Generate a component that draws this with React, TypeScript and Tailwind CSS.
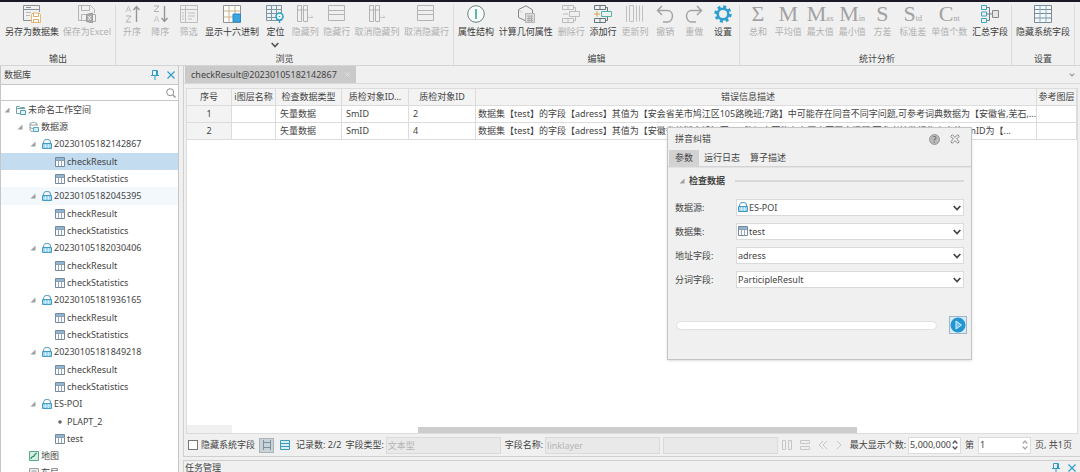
import type { ReactNode } from "react";
import { clsx } from "clsx";

// --------------------------------------------------------
// Icons
// --------------------------------------------------------

interface SvgProps {
    children: ReactNode;
    className?: string;
    box?: string;
}

const Svg = ({ children, className = "w-[18px] h-[18px]", box = "0 0 18 18" }: SvgProps) => (
    <svg viewBox={box} className={clsx("shrink-0", className)} fill="none" stroke="currentColor" strokeWidth="1" aria-hidden="true">
        {children}
    </svg>
);

const SaveDatasetIcon = () => (
    <Svg>
        <path d="M9 15.500H.5V.5h16V7M.5 4.500h16M3 2.500h5" stroke="#8a9096" />
        <path d="M3 7.500h5M3 10.500h4" stroke="#b5babf" />
        <path d="M8.500 17.500v-8l1.500-1.500h6l1.500 1.500v8z" fill="#fff" stroke="#e8b877" />
        <path d="M10.500 8v3.500h5V8M10.500 17.500v-3h5v3" stroke="#e0a860" />
    </Svg>
);

const SaveExcelIcon = () => (
    <Svg>
        <path d="M8 15.500H.5V.5h12l4 4V8M3.500.5v5h8v-5M3.500 15.500v-6H8" stroke="#b4b4b4" />
        <path d="M8.500 9.500l6-1.500v10l-6-1.500z" fill="#aaa" stroke="#999" />
        <path d="M10 11l3 4M13 11l-3 4" stroke="#eee" />
        <path d="M14.500 9.500h3v7h-3" stroke="#aaa" />
    </Svg>
);

const SortIcon = ({ down = false }: { down?: boolean }) => (
    <Svg>
        <path d={down ? "M3 1h5L3 6.500h5" : "M3 11h5l-5 6h5"} stroke="#b0b0b0" />
        <path d={down ? "M3 17l2.500-6 2.500 6M4 15h3" : "M3 7l2.500-6L8 7M4 5h3"} stroke={down ? "#ccc" : "#c4c4c4"} />
        {down ? <path d="M13.500 1v15M10.500 13l3 3.500 3-3.500" stroke="#969696" strokeWidth="1.4" /> : <path d="M13.500 17V2M10.500 5l3-3.500 3 3.500" stroke="#969696" strokeWidth="1.4" />}
    </Svg>
);

const FilterIcon = () => (
    <Svg>
        <path d="M.5.5h17v17H.5zM.5 4.500h17M5.500.5v17M8 8h7M8 11h7M8 14h4M2 8h2M2 11h2M2 14h2" stroke="#bdbdbd" />
    </Svg>
);

const HexIcon = () => (
    <Svg>
        <path d="M.5.5h17v17H.5z" fill="#fdfdfb" stroke="#8b9298" />
        <path d="M.5 6h17M.5 12h17M6 .5v17M12 .5v17" stroke="#c9b48c" />
        <path d="M10 9h7.500v8H10z" fill="#3aa5e0" stroke="#2b87c4" />
    </Svg>
);

const LocateIcon = () => (
    <Svg>
        <path d="M.5.5h15v15H.5zM.5 4.500h15M.5 8.500h15M.5 12.500h15M5.500.5v15M10.500.5v15" stroke="#7d97a3" />
        <circle cx="13.500" cy="11.500" r="3.500" fill="#eefaff" stroke="#27a3c9" strokeWidth="1.600" />
        <path d="M13.500 15v3M13.500 11v1" stroke="#27a3c9" strokeWidth="1.400" />
    </Svg>
);

const HideColIcon = () => (
    <Svg>
        <path d="M1.500.5h4v16h-4zM7.500.5h4v16h-4zM1.500 5h10" stroke="#b3b3b3" />
        <path d="M12 12.500h5M15 10.500l2 2" stroke="#c8c8c8" />
    </Svg>
);

const HideRowIcon = () => (
    <Svg>
        <path d="M.5.5h16v5H.5zM.5 9.500h16v6H.5zM.5 5.500v4M16.500 5.500v4" stroke="#b3b3b3" />
    </Svg>
);

const AttrIcon = () => (
    <Svg>
        <circle cx="9" cy="9" r="8.300" fill="#f7fbfa" stroke="#6f8180" />
        <path d="M9 4v10" stroke="#35ab93" strokeWidth="1.600" />
    </Svg>
);

const GeometryIcon = () => (
    <Svg>
        <path d="M8 15.500l-6.500-3v-8L9 .8l6.500 4V8" stroke="#858585" />
        <path d="M1.500 5l4 2.500" stroke="#ccc" />
        <path d="M8.500 8.500h9v9h-9z" fill="#dcdcdc" stroke="#b4b4b4" />
        <path d="M10 11h6M10 13.500h6M10 15.500h6M12 11v6M14.500 11v6" stroke="#adadad" />
    </Svg>
);

const RowsIcon = ({ add = false }: { add?: boolean }) => (
    <Svg className={add ? "w-[20px] h-[18px] text-[#65767c]" : "w-[20px] h-[18px] text-[#bcbcbc]"} box="0 0 20 18">
        <path d="M1.500.5h11v4h-11zM7 .5v4M1.500 13.500h11v4h-11zM7 13.500v4M12.500 2.500h2v4M12.500 15.500h2v-4" />
        <path d="M8.500 6.500h10v5h-10z" stroke={add ? "#4fb3a8" : "#bcbcbc"} />
        <path d={add ? "M1 9h6M4 6v6" : "M2 9h5"} stroke={add ? "#d9a54c" : "#bcbcbc"} />
    </Svg>
);

const UpdateColIcon = () => (
    <Svg>
        <path d="M.5 1v16M3.500.5h4v16h-4zM10.500.5v16M13.500.5v16M16.500.5v16" stroke="#c0c0c0" />
    </Svg>
);

const UndoIcon = ({ redo = false }: { redo?: boolean }) => (
    <Svg>
        <g transform={redo ? "matrix(-1 0 0 1 18 0)" : undefined} stroke="#a3a3a3" strokeWidth="1.500">
            <path d="M6 1L1.500 5.500 6 10M1.500 5.500h10c3 0 5 2.500 5 5.500s-2 6-5 6H7" />
        </g>
    </Svg>
);

const GearIcon = () => (
    <Svg>
        <circle cx="9" cy="9" r="7.300" stroke="#2f9fd0" strokeWidth="2.800" strokeDasharray="3 2.730" />
        <circle cx="9" cy="9" r="5.300" stroke="#2f9fd0" strokeWidth="2.600" />
    </Svg>
);

const SummaryIcon = () => (
    <Svg>
        <path d="M.5.5h5v4h-5zM.5 7h5v4h-5zM.5 13.500h5v4h-5z" stroke="#3ba5c4" />
        <path d="M5.500 2.500h3v13h-3M5.500 9h6" stroke="#6c8089" />
        <path d="M11.500 5.500h6v7h-6z" fill="#e3e6e8" stroke="#888" />
    </Svg>
);

const HideSysIcon = () => (
    <Svg>
        <path d="M.5.5h17v17H.5zM.5 4.500h17M.5 8.500h17M.5 13h17" fill="#f4f8fa" stroke="#7b8b95" />
        <path d="M6 .5v17M12 .5v17" stroke="#7fb0c8" />
    </Svg>
);

const StatLetter = ({ big, small }: { big: string; small?: string }) => (
    <span className="flex items-end justify-center h-[18px] font-['Liberation_Serif',serif] text-[#a2a2a2]" aria-hidden="true">
        <span className="text-[22px] leading-[18px]">{big}</span>
        {small && <span className="text-[8px] leading-[8px]">{small}</span>}
    </span>
);

const PinIcon = () => (
    <Svg className="w-2 h-2.5 text-[#2f9ccc]" box="0 0 8 10">
        <path d="M1.500.5h5v5h-5zM0 5.500h8M4 6v4M5.500 1v4" />
    </Svg>
);

const CloseIcon = () => (
    <Svg className="w-2 h-2 text-[#2f9ccc]" box="0 0 8 8">
        <path d="M.5.5l7 7M7.500.5l-7 7" strokeWidth="1.200" />
    </Svg>
);

const LockIcon = () => (
    <Svg className="w-2.5 h-2.5" box="0 0 10 10">
        <path d="M1.500 5V3.500a3.500 3 0 017 0V5" stroke="#64a5cb" strokeWidth="1.200" />
        <path d="M.5 4.500h9v5h-9z" fill="#8dcdec" stroke="#459ac8" />
        <path d="M3.500 5v4M6.500 5v4M1 7h8" stroke="#e6f6fd" strokeWidth=".7" />
    </Svg>
);

const TableIcon = () => (
    <Svg className="w-2.5 h-2.5" box="0 0 10 10">
        <path d="M.5.5h9v9h-9z" fill="#f8fbfd" stroke="#76889a" />
        <path d="M1 1h8v2.500H1z" fill="#8fb6d2" stroke="none" />
        <path d="M.5 3.500h9M3.500 3.500v6M6.500 3.500v6" stroke="#8293a4" strokeWidth=".8" />
    </Svg>
);

const WorkspaceIcon = () => (
    <Svg className="w-2.5 h-2.5" box="0 0 10 10">
        <path d="M4 8.500H.5v-7h3l1 1h4V4M.5 3.500h8" stroke="#6fa3a8" />
        <path d="M4.500 5.500h5v4h-5z" fill="#dff2f4" stroke="#4fa0b4" />
    </Svg>
);

const SourceIcon = () => (
    <Svg className="w-2.5 h-2.5" box="0 0 10 10">
        <path d="M1 2c0-2 7-2 7 0v2M1 2v6c0 1 2 1.500 3 1.500M1 2c0 1.500 7 1.500 7 0M1 5c0 1 2 1.500 3 1.500" stroke="#8a9ca5" />
        <path d="M4.500 5.500h5v4h-5z" fill="#d4eef8" stroke="#4fa6c9" />
    </Svg>
);

const MapIcon = () => (
    <Svg className="w-2.5 h-2.5" box="0 0 10 10">
        <path d="M.5.5h9v9h-9z" fill="#d6efe2" stroke="#57a883" />
        <path d="M2 8c0-3 2-2 3-3s0-2 3-3" stroke="#2c8f6c" strokeWidth="1.300" />
    </Svg>
);

const LayoutIcon = () => (
    <Svg className="w-2.5 h-2.5" box="0 0 10 10">
        <path d="M.5.5h9v9h-9zM2.500 3h5M2.500 5h5" fill="#eee" stroke="#9aa0a5" />
    </Svg>
);

const DotIcon = () => (
    <Svg className="w-2.5 h-2.5" box="0 0 10 10">
        <circle cx="5" cy="5" r="1.800" fill="#666" stroke="none" />
    </Svg>
);

const Expander = () => (
    <Svg className="w-[6px] h-[6px]" box="0 0 6 6">
        <path d="M5.500.5v5h-5z" fill="#a0a0a0" stroke="none" />
    </Svg>
);

const Chevron = ({ className = "w-2 h-[6px] text-[#444]" }: { className?: string }) => (
    <Svg className={className} box="0 0 8 6">
        <path d="M.7 1L4 4.500 7.300 1" strokeWidth="1.700" />
    </Svg>
);

const ListIcon = () => (
    <Svg className="w-2.5 h-2.5 text-[#3c9bb5]" box="0 0 10 10">
        <path d="M.5.500h9v9h-9zM.5 3.500h9M.5 6.500h9" fill="#d7eef4" />
    </Svg>
);

const FormIcon = () => (
    <Svg className="w-2.5 h-2.5 text-[#7b929c]" box="0 0 10 10">
        <path d="M1.500 0v10M8.500 0v10M1.500 2.500h7M1.500 7.500h7" />
    </Svg>
);

// --------------------------------------------------------
// Data
// --------------------------------------------------------

interface Tool {
    label: string;
    icon: ReactNode;
    disabled?: boolean;
    menu?: boolean;
}

const ribbon: { title: string; width: string; tools: Tool[] }[] = [
    {
        title: "输出",
        width: "w-[116px] pl-[5px] pr-1",
        tools: [
            { label: "另存为数据集", icon: <SaveDatasetIcon /> },
            { label: "保存为Excel", icon: <SaveExcelIcon />, disabled: true },
        ],
    },
    {
        title: "浏览",
        width: "w-[338px] px-1",
        tools: [
            { label: "升序", icon: <SortIcon />, disabled: true },
            { label: "降序", icon: <SortIcon down />, disabled: true },
            { label: "筛选", icon: <FilterIcon />, disabled: true },
            { label: "显示十六进制", icon: <HexIcon /> },
            { label: "定位", icon: <LocateIcon />, menu: true },
            { label: "隐藏列", icon: <HideColIcon />, disabled: true },
            { label: "隐藏行", icon: <HideRowIcon />, disabled: true },
            { label: "取消隐藏列", icon: <HideColIcon />, disabled: true },
            { label: "取消隐藏行", icon: <HideRowIcon />, disabled: true },
        ],
    },
    {
        title: "编辑",
        width: "w-[286px] px-1",
        tools: [
            { label: "属性结构", icon: <AttrIcon /> },
            { label: "计算几何属性", icon: <GeometryIcon /> },
            { label: "删除行", icon: <RowsIcon />, disabled: true },
            { label: "添加行", icon: <RowsIcon add /> },
            { label: "更新列", icon: <UpdateColIcon />, disabled: true },
            { label: "撤销", icon: <UndoIcon />, disabled: true },
            { label: "重做", icon: <UndoIcon redo />, disabled: true },
            { label: "设置", icon: <GearIcon /> },
        ],
    },
    {
        title: "统计分析",
        width: "w-[272px] pl-[6px] pr-[3px]",
        tools: [
            { label: "总和", icon: <StatLetter big="Σ" />, disabled: true },
            { label: "平均值", icon: <StatLetter big="M" />, disabled: true },
            { label: "最大值", icon: <StatLetter big="M" small="ax" />, disabled: true },
            { label: "最小值", icon: <StatLetter big="M" small="in" />, disabled: true },
            { label: "方差", icon: <StatLetter big="S" />, disabled: true },
            { label: "标准差", icon: <StatLetter big="S" small="td" />, disabled: true },
            { label: "单值个数", icon: <StatLetter big="C" small="nt" />, disabled: true },
            { label: "汇总字段", icon: <SummaryIcon /> },
        ],
    },
    {
        title: "设置",
        width: "w-[63px] px-1",
        tools: [{ label: "隐藏系统字段", icon: <HideSysIcon /> }],
    },
];

interface Node {
    label: string;
    level: number;
    icon: ReactNode;
    open?: boolean;
    state?: "selected" | "hover";
}

const results = (name: string, first?: "selected", state?: "hover"): Node[] => [
    { label: name, level: 2, icon: <LockIcon />, open: true, state },
    { label: "checkResult", level: 3, icon: <TableIcon />, state: first },
    { label: "checkStatistics", level: 3, icon: <TableIcon /> },
];

const tree: Node[] = [
    { label: "未命名工作空间", level: 0, icon: <WorkspaceIcon />, open: true },
    { label: "数据源", level: 1, icon: <SourceIcon />, open: true },
    ...results("20230105182142867", "selected"),
    ...results("20230105182045395", undefined, "hover"),
    ...results("20230105182030406"),
    ...results("20230105181936165"),
    ...results("20230105181849218"),
    { label: "ES-POI", level: 2, icon: <LockIcon />, open: true },
    { label: "PLAPT_2", level: 3, icon: <DotIcon /> },
    { label: "test", level: 3, icon: <TableIcon /> },
    { label: "地图", level: 1, icon: <MapIcon /> },
    { label: "布局", level: 1, icon: <LayoutIcon /> },
];

const indent = ["pl-[3px]", "pl-[16px]", "pl-[29px]", "pl-[42px]"];

const records = [
    {
        id: 1,
        type: "矢量数据",
        field: "SmID",
        target: "2",
        message: "数据集【test】的字段【adress】其值为【安会省芜市鸠江区105路晚班;7路】中可能存在同音不同字问题,可参考词典数据为【安徽省,芜石,...",
    },
    {
        id: 2,
        type: "矢量数据",
        field: "SmID",
        target: "4",
        message: "数据集【test】的字段【adress】其值为【安徽省芜湖市鸠江区105路】中可能存在同音不同字问题,可参考该数据集之中的SmID为【...",
    },
];

const fields = [
    { id: "source", label: "数据源:", value: "ES-POI", icon: <LockIcon /> },
    { id: "dataset", label: "数据集:", value: "test", icon: <TableIcon /> },
    { id: "address", label: "地址字段:", value: "adress" },
    { id: "participle", label: "分词字段:", value: "ParticipleResult" },
];

// --------------------------------------------------------
// Sections
// --------------------------------------------------------

const Ribbon = () => (
    <header className="flex shrink-0 border-t-2 border-[#1b1828] border-b border-b-[#d4d4d4] bg-[#f0f0f0] pt-[3px]">
        {ribbon.map(group => (
            <section key={group.title} className={clsx("flex flex-col justify-between shrink-0 h-[60px] border-r border-[#dadada]", group.width)}>
                <div className="flex justify-between">
                    {group.tools.map(tool => (
                        <button key={tool.label} type="button" disabled={tool.disabled} className={clsx("flex flex-col items-center min-w-6 whitespace-nowrap leading-3", tool.disabled ? "text-[#b0b0b0]" : "text-[#3c3c3c]")}>
                            {tool.icon}
                            <span className="mt-[3px]">{tool.label}</span>
                            {tool.menu && <Chevron className="w-2 h-[6px] mt-1 text-[#555]" />}
                        </button>
                    ))}
                </div>
                <h2 className="text-center leading-3">{group.title}</h2>
            </section>
        ))}
    </header>
);

const Sidebar = () => (
    <aside className="flex flex-col shrink-0 w-[179px] border-x border-[#c6c6c6] bg-white overflow-hidden">
        <div className="flex items-center shrink-0 gap-2 h-[18px] px-[3px] bg-[#f0f0f0]">
            <h2 className="flex-1">数据库</h2>
            <button type="button" aria-label="固定"><PinIcon /></button>
            <button type="button" aria-label="关闭"><CloseIcon /></button>
        </div>
        <label className="flex items-center shrink-0 h-[17px] pr-0.5 border-y border-[#c6c6c6]">
            <input type="text" aria-label="搜索" className="flex-1 min-w-0 h-full px-1 outline-none" />
            <Svg className="w-2.5 h-2.5 text-[#8b8b8b]" box="0 0 10 10">
                <circle cx="4.200" cy="4.200" r="3.500" />
                <path d="M7 7l2.500 2.500" strokeWidth="1.300" />
            </Svg>
        </label>
        <ul role="tree" className="text-[#444]">
            {tree.map((node, i) => (
                <li
                    key={i}
                    role="treeitem"
                    aria-level={node.level + 1}
                    aria-selected={node.state === "selected"}
                    className={clsx(
                        "flex items-center whitespace-nowrap",
                        indent[node.level],
                        node.level === 2 ? "h-[18px]" : "h-[17px]",
                        node.state === "selected" && "bg-[#c3dcf0]",
                        node.state === "hover" && "bg-[#f3f8fc]"
                    )}
                >
                    <span className="w-[12px] shrink-0">{node.open && <Expander />}</span>
                    {node.icon}
                    <span className="ml-0.5">{node.label}</span>
                </li>
            ))}
        </ul>
    </aside>
);

const head = "border-b border-r border-[#dcdcdc] bg-[#f3f3f3] font-normal text-center";
const cell = "border-b border-r border-[#dcdcdc] whitespace-nowrap";

const DataTable = () => (
    <div className="flex flex-col flex-1 min-h-0 mx-0.5 border border-[#dcdcdc] bg-white overflow-hidden">
        <table className="w-full table-fixed border-separate border-spacing-0 text-[#444]">
            <colgroup>
                <col className="w-[45px]" />
                <col className="w-[44px]" />
                <col className="w-[66px]" />
                <col className="w-[67px]" />
                <col className="w-[67px]" />
                <col />
                <col className="w-[40px]" />
            </colgroup>
            <thead>
                <tr className="h-[17px] whitespace-nowrap">
                    <th className={head}>序号</th>
                    <th className={head}>i图层名称</th>
                    <th className={head}>检查数据类型</th>
                    <th className={head}>质检对象ID...</th>
                    <th className={head}>质检对象ID</th>
                    <th className={clsx(head, "pr-4")}>错误信息描述</th>
                    <th className={head}>参考图层</th>
                </tr>
            </thead>
            <tbody>
                {records.map(row => (
                    <tr key={row.id} className="h-[17px]">
                        <th className={head}>{row.id}</th>
                        <td className={cell} />
                        <td className={clsx(cell, "px-1")}>{row.type}</td>
                        <td className={clsx(cell, "px-1")}>{row.field}</td>
                        <td className={clsx(cell, "px-1")}>{row.target}</td>
                        <td className={clsx(cell, "pl-0.5")}>{row.message}</td>
                        <td className={cell} />
                    </tr>
                ))}
            </tbody>
        </table>
        <div className="flex items-end mt-auto h-2">
            <div className="w-[45px] h-2 bg-[#f0f0f0]" />
            <div className="flex-1 h-[6px]">
                <div className="ml-[22%] w-[52%] h-[6px] bg-[#cdcdcd]" />
            </div>
        </div>
    </div>
);

const Spinner = ({ label, value, dim }: { label: string; value: string; dim?: boolean }) => (
    <span className="flex items-center h-[17px] pl-px pr-0.5 border border-[#dcdcdc] bg-white">
        <input type="text" aria-label={label} defaultValue={value} className="w-[42px] outline-none" />
        <Svg className={clsx("w-[6px] h-2.5", dim ? "text-[#aaa]" : "text-[#555]")} box="0 0 6 10">
            <path d="M.7 3.500L3 1l2.300 2.500M.7 6.500L3 9l2.300-2.500" strokeWidth="1.300" />
        </Svg>
    </span>
);

const readOnlyBox = "h-[17px] min-w-0 px-px border border-[#dadada] bg-[#e9e9e9] text-[#b4b4b4] outline-none";

const StatusBar = () => (
    <div className="flex items-center shrink-0 h-[22px] pl-[4px] pr-2 whitespace-nowrap">
        <label className="flex items-center gap-[3px]">
            <input type="checkbox" className="appearance-none w-2.5 h-2.5 border border-[#777] bg-white" />
            隐藏系统字段
        </label>
        <button type="button" aria-label="表格视图" className="ml-1 grid place-items-center w-[15px] h-[15px] border border-[#a9b4ba] bg-[#c9d2d7]">
            <FormIcon />
        </button>
        <button type="button" aria-label="列表视图" className="ml-1.5">
            <ListIcon />
        </button>
        <span className="ml-1.5">记录数: 2/2</span>
        <label htmlFor="fieldType" className="ml-1">字段类型:</label>
        <input id="fieldType" readOnly defaultValue="文本型" className={clsx(readOnlyBox, "ml-0.5 flex-1")} />
        <label htmlFor="fieldName" className="ml-1">字段名称:</label>
        <input id="fieldName" readOnly defaultValue="linklayer" className={clsx(readOnlyBox, "ml-0.5 flex-1")} />
        <input readOnly aria-label="字段值" className={clsx(readOnlyBox, "ml-[3px] flex-1")} />
        <span className="flex items-center gap-2 ml-1 text-[#c6c6c6]">
            <button type="button" disabled aria-label="列"><Svg className="w-2.5 h-2.5" box="0 0 10 10"><path d="M.5.5h3v9h-3zM6.500.5h3v9h-3z" /></Svg></button>
            <button type="button" disabled aria-label="行"><Svg className="w-2.5 h-2.5" box="0 0 10 10"><path d="M.5.500h9v3h-9zM.5 6.500h9v3h-9z" /></Svg></button>
            <button type="button" disabled aria-label="第一页"><Svg className="w-2.5 h-2.5" box="0 0 10 10"><path d="M5 1L1 5l4 4M9 1L5 5l4 4" /></Svg></button>
            <button type="button" disabled aria-label="下一页"><Svg className="w-[6px] h-2.5" box="0 0 6 10"><path d="M1 1l4 4-4 4" /></Svg></button>
        </span>
        <span className="ml-2 mr-0.5">最大显示个数:</span>
        <Spinner label="最大显示个数" value="5,000,000" />
        <span className="mx-1">第</span>
        <Spinner label="页码" value="1" dim />
        <span className="ml-1">页, 共1页</span>
    </div>
);

const CheckDialog = () => (
    <div role="dialog" aria-label="拼音纠错" className="absolute left-[667px] top-[127px] w-[305px] border border-[#c4c4c4] bg-[#f0f0f0] shadow-sm pb-[25px]">
        <div className="flex items-center h-[22px] pl-[7px] pr-[11px]">
            <h2 className="flex-1">拼音纠错</h2>
            <button type="button" aria-label="帮助" className="mr-2.5 w-[11px] h-[11px] rounded-full border border-[#999] bg-[#b9b9b9] text-[#666] leading-[9px]">?</button>
            <button type="button" aria-label="关闭">
                <Svg className="w-2.5 h-2.5 text-[#7c7c7c]" box="0 0 10 10">
                    <path d="M.7 2.300L2.300.7 5 3.400 7.700.7l1.600 1.600L6.600 5l2.700 2.700-1.600 1.600L5 6.600 2.300 9.300.7 7.700 3.400 5z" strokeWidth=".9" />
                </Svg>
            </button>
        </div>
        <div role="tablist" className="flex h-[17px] px-px border-b border-[#d4d4d4] shadow-[0_1px_0_#e3e3e3]">
            <button type="button" role="tab" aria-selected="true" className="px-[6px] bg-[#d2d2d2]">参数</button>
            <button type="button" role="tab" aria-selected="false" className="px-[5px]">运行日志</button>
            <button type="button" role="tab" aria-selected="false" className="px-[5px]">算子描述</button>
        </div>
        <div className="flex items-center h-[28px] pl-[11px] pr-[7px]">
            <Expander />
            <h3 className="ml-1 font-bold">检查数据</h3>
            <span className="ml-2.5 flex-1 h-0.5 bg-[#d8d8d8]" />
        </div>
        <div className="flex flex-col gap-[7px] pt-1 pl-[7px] pr-[7px]">
            {fields.map(field => (
                <div key={field.id} className="flex items-center h-[17px]">
                    <label htmlFor={field.id} className="w-[61px] shrink-0">{field.label}</label>
                    <div className="relative flex-1">
                        <select id={field.id} className={clsx("appearance-none block w-full h-[17px] border border-[#dadada] bg-white outline-none", field.icon ? "pl-3" : "pl-px")}>
                            <option>{field.value}</option>
                        </select>
                        {field.icon && <span className="absolute left-0.5 top-[3px] pointer-events-none">{field.icon}</span>}
                        <span className="absolute right-[3px] top-[6px] pointer-events-none"><Chevron /></span>
                    </div>
                </div>
            ))}
        </div>
        <div className="flex items-center gap-3 mt-7 pl-2 pr-1">
            <div role="progressbar" aria-label="进度" aria-valuenow={0} className="flex-1 h-[9px] rounded-full border border-[#e0e0e0] bg-white" />
            <button type="button" aria-label="运行" className="grid place-items-center w-[18px] h-[18px] border border-[#9fb6c6] bg-[#d8ebf7]">
                <Svg className="w-4 h-4" box="0 0 16 16">
                    <circle cx="8" cy="8" r="7.500" fill="#2196d3" stroke="none" />
                    <path d="M6 4l5.500 4L6 12z" fill="#6cc0ec" stroke="#d9f0fb" />
                </Svg>
            </button>
        </div>
    </div>
);

export default function App() {
    return (
        <div className="relative flex flex-col h-screen overflow-hidden bg-[#f0f0f0] font-['Noto_Sans','Noto_Sans_CJK_SC',sans-serif] text-[9px] leading-[14px] text-[#444]">
            <Ribbon />
            <div className="flex flex-1 min-h-0">
                <Sidebar />
                <main className="flex flex-col flex-1 min-w-0 ml-1">
                    <section className="flex flex-col flex-1 min-h-0 border-l border-b border-[#cfcfcf]">
                        <div className="flex items-center shrink-0 h-[18px] mb-1 pl-px pr-[5px] border-b border-[#dadada]">
                            <button type="button" className="flex items-center gap-2 h-full px-[6px] bg-[#cacaca]">
                                checkResult@20230105182142867
                                <Svg className="w-[5px] h-[5px] text-[#e4e4e4]" box="0 0 5 5">
                                    <path d="M.5.5l4 4M4.500.5l-4 4" />
                                </Svg>
                            </button>
                            <Chevron className="ml-auto w-1.5 h-1 text-[#999]" />
                        </div>
                        <DataTable />
                        <StatusBar />
                    </section>
                    <section className="flex items-start shrink-0 gap-2 h-[12px] mt-[3px] pl-px pr-1 border-t border-l border-[#cfcfcf]">
                        <h2 className="flex-1">任务管理</h2>
                        <button type="button" aria-label="固定" className="mt-0.5"><PinIcon /></button>
                        <button type="button" aria-label="关闭" className="mt-[3px]"><CloseIcon /></button>
                    </section>
                </main>
            </div>
            <CheckDialog />
        </div>
    );
}
